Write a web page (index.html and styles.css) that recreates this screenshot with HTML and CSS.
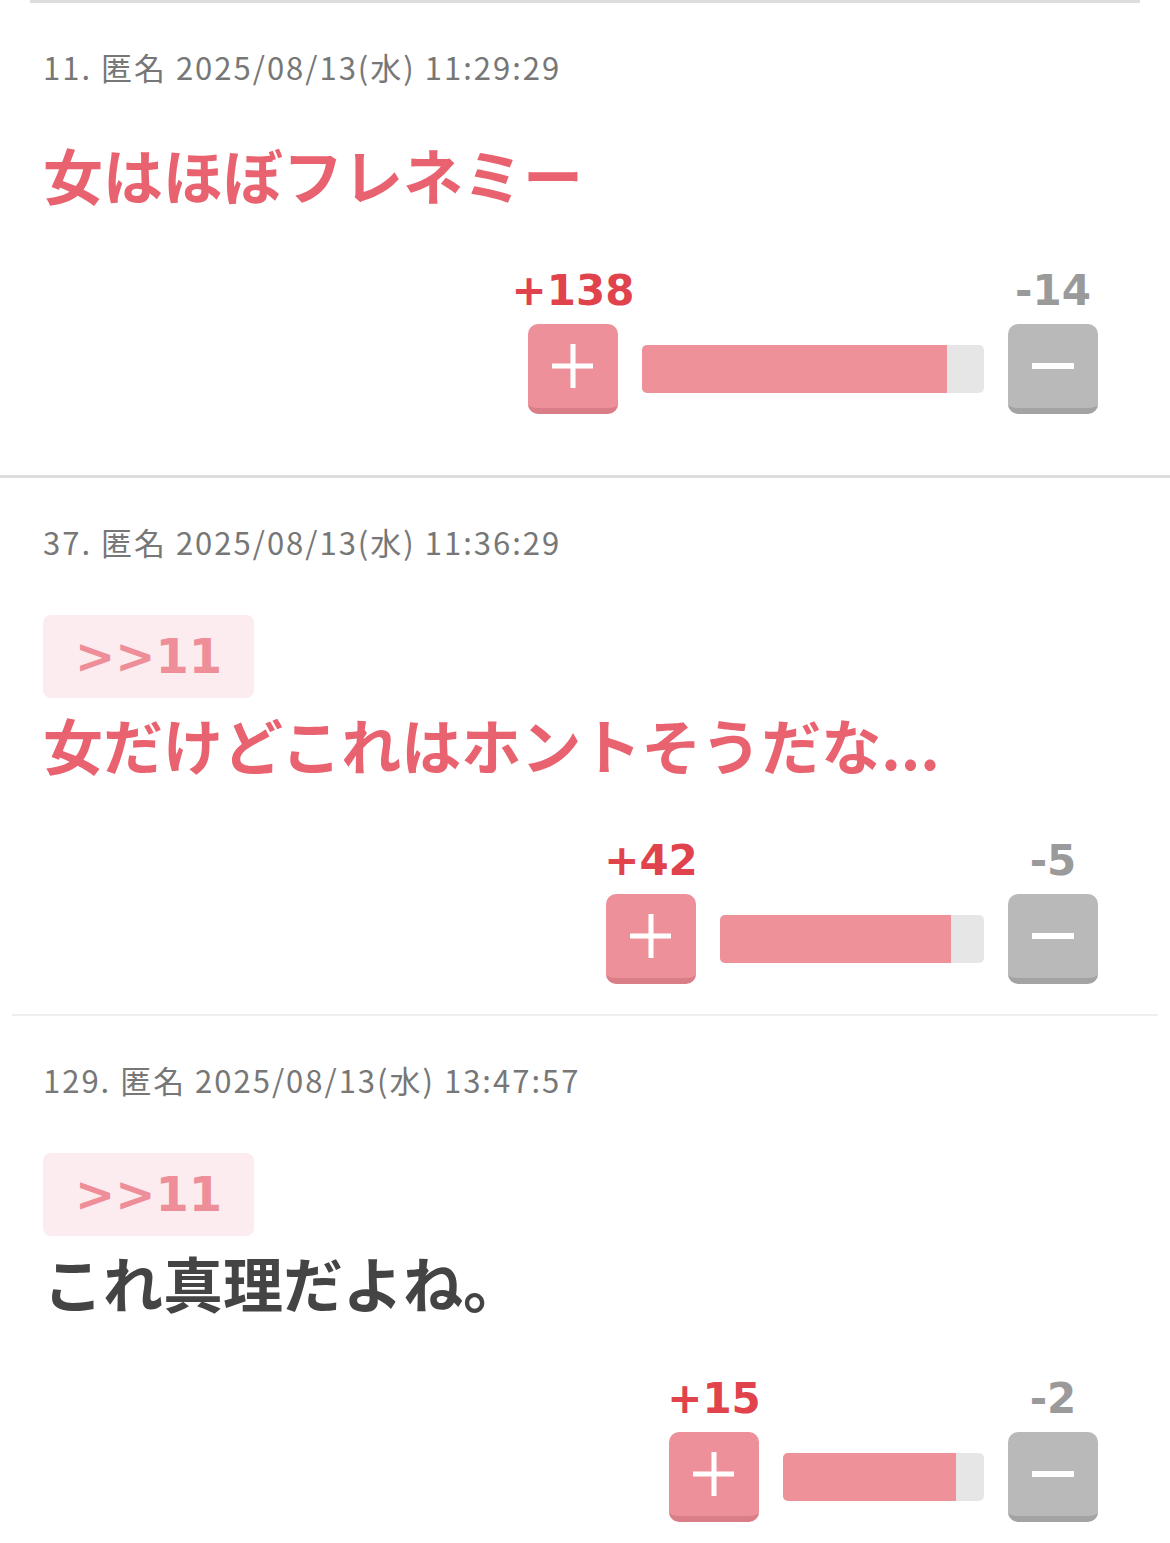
FILE: index.html
```html
<!DOCTYPE html>
<html lang="ja">
<head>
    <meta charset="UTF-8">
    <meta name="viewport" content="width=device-width, initial-scale=1.0">
    <title>コメント</title>
    <link rel="stylesheet" href="styles.css">
</head>
<body>
    <div class="rule-top"></div>

    <div class="comment comment-first">
        <div class="meta">11. 匿名 2025/08/13(水) 11:29:29</div>
        <p class="body pink">女はほぼフレネミー</p>
        <div class="vote">
            <div class="vote-col">
                <span class="count plus-count">+138</span>
                <button class="btn btn-plus">
                    <svg width="44" height="44" viewBox="0 0 44 44"><path d="M22 0V44M1 22H42" stroke="#fff" stroke-width="5"/></svg>
                </button>
            </div>
            <div class="bar" style="width: 342px"><div class="fill" style="width: 305px"></div></div>
            <div class="vote-col">
                <span class="count minus-count">-14</span>
                <button class="btn btn-minus">
                    <svg width="44" height="44" viewBox="0 0 44 44"><path d="M1 22H43" stroke="#fff" stroke-width="6"/></svg>
                </button>
            </div>
        </div>
    </div>

    <div class="rule"></div>

    <div class="comment comment-second">
        <div class="meta">37. 匿名 2025/08/13(水) 11:36:29</div>
        <div class="anchor">&gt;&gt;11</div>
        <p class="body pink">女だけどこれはホントそうだな...</p>
        <div class="vote">
            <div class="vote-col">
                <span class="count plus-count">+42</span>
                <button class="btn btn-plus">
                    <svg width="44" height="44" viewBox="0 0 44 44"><path d="M22 0V44M1 22H42" stroke="#fff" stroke-width="5"/></svg>
                </button>
            </div>
            <div class="bar" style="width: 264px"><div class="fill" style="width: 231px"></div></div>
            <div class="vote-col">
                <span class="count minus-count">-5</span>
                <button class="btn btn-minus">
                    <svg width="44" height="44" viewBox="0 0 44 44"><path d="M1 22H43" stroke="#fff" stroke-width="6"/></svg>
                </button>
            </div>
        </div>
    </div>

    <div class="rule rule-light"></div>

    <div class="comment">
        <div class="meta">129. 匿名 2025/08/13(水) 13:47:57</div>
        <div class="anchor">&gt;&gt;11</div>
        <p class="body">これ真理だよね。</p>
        <div class="vote">
            <div class="vote-col">
                <span class="count plus-count">+15</span>
                <button class="btn btn-plus">
                    <svg width="44" height="44" viewBox="0 0 44 44"><path d="M22 0V44M1 22H42" stroke="#fff" stroke-width="5"/></svg>
                </button>
            </div>
            <div class="bar" style="width: 201px"><div class="fill" style="width: 173px"></div></div>
            <div class="vote-col">
                <span class="count minus-count">-2</span>
                <button class="btn btn-minus">
                    <svg width="44" height="44" viewBox="0 0 44 44"><path d="M1 22H43" stroke="#fff" stroke-width="6"/></svg>
                </button>
            </div>
        </div>
    </div>
</body>
</html>
```

FILE: styles.css
```css
body {
    margin: 0;
    background: #fff;
    font-family: "Noto Sans CJK JP", "Noto Sans", sans-serif;
    color: #444;
}
.rule-top {
    height: 3px;
    margin: 0 30px;
    background: #ddd;
}
.rule {
    height: 3px;
    background: #ddd;
}
.rule-light {
    height: 2px;
    margin: 0 12px;
    background: #eee;
}
.comment {
    padding: 42px 0 21px 43px;
}
.comment-first {
    padding-bottom: 61px;
}
.comment-second {
    padding-bottom: 30px;
}
.meta {
    font-size: 31px;
    line-height: 44px;
    letter-spacing: 2px;
    color: #777;
    font-weight: 400;
}
.anchor {
    display: inline-block;
    margin-top: 51px;
    height: 83px;
    width: 211px;
    box-sizing: border-box;
    padding-left: 32px;
    background: #fdecef;
    border-radius: 8px;
    font-family: "DejaVu Sans", sans-serif;
    font-weight: bold;
    font-size: 48px;
    line-height: 83px;
    color: #ee8e99;
}
.body {
    margin: 46px 0 0;
    font-size: 60px;
    line-height: 78px;
    font-weight: 700;
    color: #444;
}
.anchor + .body {
    margin-top: 7px;
}
.body.pink {
    color: #e8636f;
}
.vote {
    display: flex;
    justify-content: flex-end;
    align-items: flex-end;
    gap: 24px;
    margin-top: 57px;
    padding-right: 72px;
}
.vote-col {
    width: 90px;
    display: flex;
    flex-direction: column;
    align-items: center;
}
.count {
    font-family: "DejaVu Sans", sans-serif;
    font-weight: bold;
    font-size: 42px;
    line-height: 42px;
    white-space: nowrap;
    margin-bottom: 12px;
}
.plus-count {
    color: #e0434c;
}
.minus-count {
    color: #9a9a9a;
}
.btn {
    width: 90px;
    height: 90px;
    box-sizing: border-box;
    border: none;
    border-radius: 10px;
    padding: 0;
    display: flex;
    align-items: center;
    justify-content: center;
    cursor: pointer;
}
.btn-plus {
    background: #ee9099;
    border-bottom: 6px solid #d97d86;
}
.btn-minus {
    background: #b9b9b9;
    border-bottom: 6px solid #a3a3a3;
}
.bar {
    height: 48px;
    margin-bottom: 21px;
    background: #e6e6e6;
    border-radius: 5px;
    overflow: hidden;
}
.fill {
    height: 100%;
    background: #ee9199;
}
```
